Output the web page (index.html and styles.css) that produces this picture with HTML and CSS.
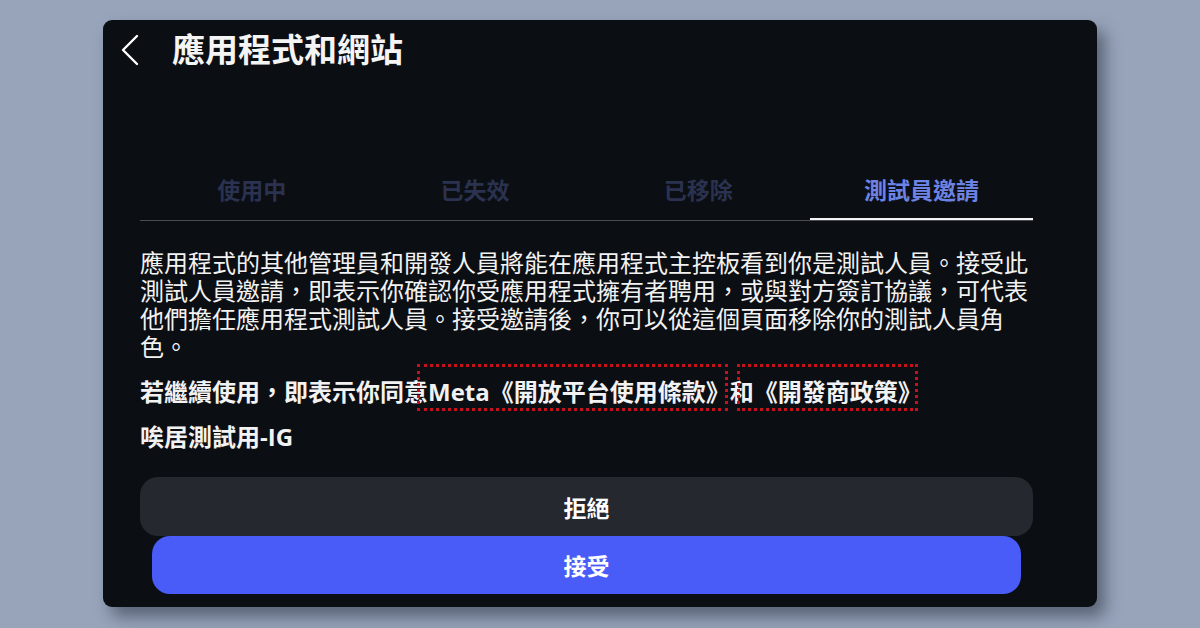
FILE: index.html
```html
<!DOCTYPE html>
<html lang="zh-Hant">
<head>
<meta charset="utf-8">
<link rel="stylesheet" href="styles.css">
</head>
<body>
<div class="stage">
  <div class="panel">
    <div class="header">
      <svg class="back" width="20" height="32" viewBox="0 0 20 32"><path d="M17 2 L3 16 L17 30" fill="none" stroke="#ffffff" stroke-width="2.4" stroke-linecap="round" stroke-linejoin="round"/></svg>
      <h1 class="title">應用程式和網站</h1>
    </div>
    <div class="content">
      <div class="tabs">
        <div class="tab">使用中</div>
        <div class="tab">已失效</div>
        <div class="tab">已移除</div>
        <div class="tab active">測試員邀請</div>
      </div>
      <p class="desc">應用程式的其他管理員和開發人員將能在應用程式主控板看到你是測試人員。接受此<br>測試人員邀請，即表示你確認你受應用程式擁有者聘用，或與對方簽訂協議，可代表<br>他們擔任應用程式測試人員。接受邀請後，你可以從這個頁面移除你的測試人員角<br>色。</p>
      <p class="terms">若繼續使用，即表示你同意<span class="latin">Meta</span>《開放平台使用條款》和《開發商政策》<span class="mark mark1"></span><span class="mark mark2"></span></p>
      <p class="appname">唉居測試用<span class="latin">-IG</span></p>
      <div class="btn reject">拒絕</div>
      <div class="btn accept">接受</div>
    </div>
  </div>
</div>
</body>
</html>
```
FILE: styles.css
```css
* { box-sizing: border-box; }
html, body { margin: 0; padding: 0; }
body {
  background: #97a4ba;
  font-family: "Noto Sans CJK TC", "Noto Sans", sans-serif;
  color: #f2f2f2;
  width: 1200px;
  height: 628px;
  overflow: hidden;
}
.stage {
  padding: 20px 0 0 103px;
}
.panel {
  width: 994px;
  height: 587px;
  background: #0b0e12;
  border-radius: 9px;
  box-shadow: 8px 10px 16px rgba(40, 48, 64, 0.55);
  display: flex;
  flex-direction: column;
}
.header {
  height: 56px;
  display: flex;
  align-items: center;
  padding-left: 17px;
}
.back { display: block; margin-top: 4px; }
.title {
  margin: 0 0 0 32px;
  font-size: 33px;
  font-weight: 700;
  color: #f4f4f4;
  line-height: 40px;
}
.content {
  padding: 0 64px 0 37px;
  display: flex;
  flex-direction: column;
}
.tabs {
  margin-top: 83px;
  display: flex;
  border-bottom: 1px solid #4a4d53;
}
.tab {
  flex: 1;
  text-align: center;
  font-size: 23px;
  font-weight: 700;
  color: #2a3250;
  height: 61px;
  line-height: 60px;
}
.tab.active {
  color: #6c83e4;
  border-bottom: 2px solid #f4f4f4;
  margin-bottom: -1px;
}
.desc {
  margin: 27px 0 0;
  font-size: 24px;
  line-height: 28px;
  font-weight: 400;
  white-space: nowrap;
}
.terms {
  position: relative;
  margin: 17px 0 0;
  font-size: 24px;
  line-height: 28px;
  font-weight: 700;
  white-space: nowrap;
}
.latin { font-family: "Open Sans", "Noto Sans", sans-serif; font-weight: 700; }
.mark {
  position: absolute;
  top: -13px;
  height: 47px;
  border: 3px dotted #c8111c;
}
.mark1 { left: 277px; width: 311px; }
.mark2 { left: 597px; width: 181px; }
.appname {
  margin: 16px 0 0;
  font-size: 24px;
  line-height: 28px;
  font-weight: 700;
}
.btn {
  display: flex;
  align-items: center;
  justify-content: center;
  font-size: 23px;
  font-weight: 700;
  color: #ffffff;
  border-radius: 18px;
}
.reject {
  margin-top: 26px;
  height: 59px;
  background: #25282e;
}
.accept {
  height: 58px;
  margin: 0 12px;
  background: #4a5cf8;
}
```
